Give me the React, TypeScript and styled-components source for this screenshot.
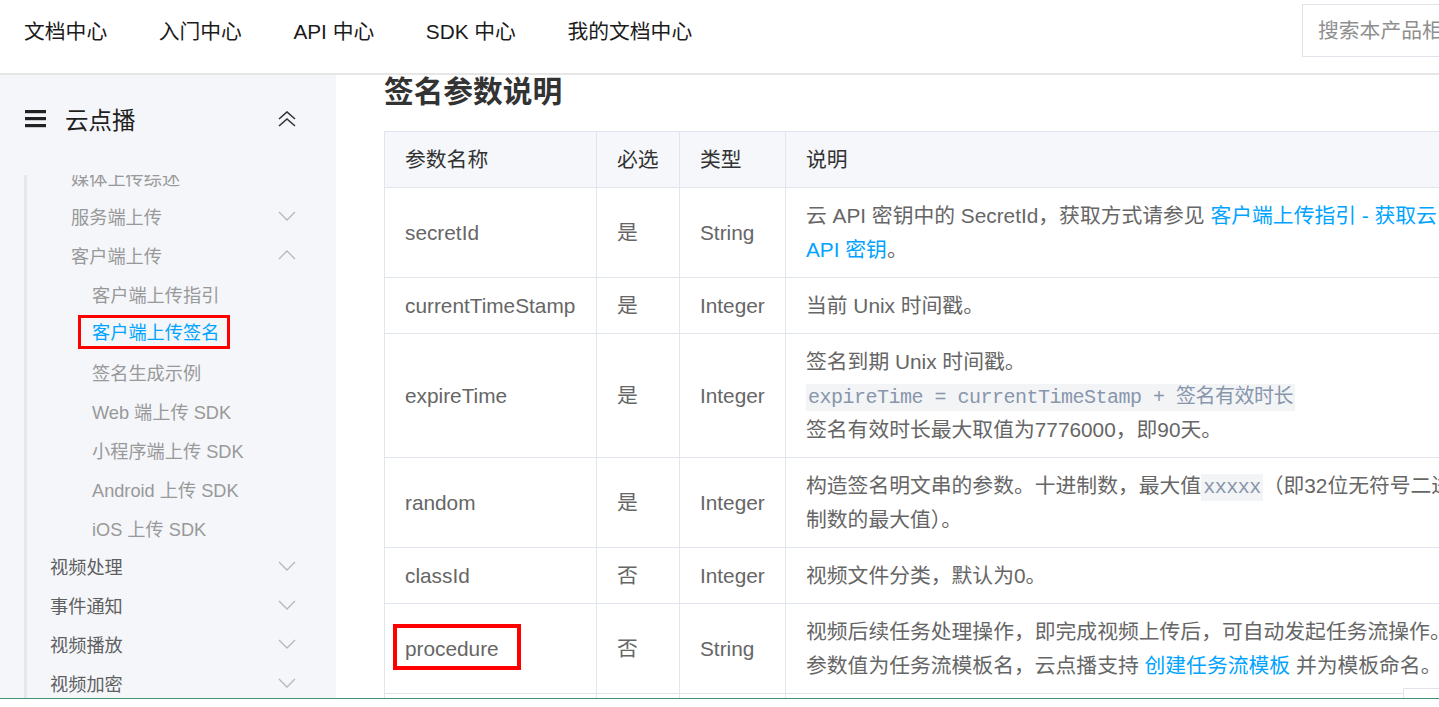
import React from "react";
import styled, { createGlobalStyle } from "styled-components";

const GlobalStyle = createGlobalStyle`
  html, body { margin: 0; padding: 0; background: #fff; }
  body {
    font-family: "Liberation Sans", "Noto Sans CJK SC", sans-serif;
    overflow: hidden;
  }
  * { box-sizing: border-box; }
`;

const Page = styled.div`
  width: 1439px;
  height: 707px;
  display: flex;
  flex-direction: column;
  overflow: hidden;
`;

const Header = styled.header`
  flex: none;
  height: 75px;
  display: flex;
  align-items: flex-start;
  padding-left: 24px;
  border-bottom: 2px solid #e6e6e6;
  background: #fff;
`;

const Nav = styled.nav`
  flex: 1;
  height: 59px;
  display: flex;
  align-items: center;
  gap: 51.5px;
`;

const NavItem = styled.a`
  font-size: 20.8px;
  color: #1b1b1b;
  text-decoration: none;
  white-space: nowrap;
`;

const Search = styled.input`
  flex: none;
  width: 137px;
  height: 53px;
  margin-top: 4px;
  padding: 0 0 0 15px;
  border: 1px solid #dfe3ea;
  border-right: none;
  outline: none;
  font-family: "Liberation Sans", "Noto Sans CJK SC", sans-serif;
  font-size: 20.8px;
  color: #333;
  background: #fff;
  &::placeholder { color: #8f8f8f; }
`;

const Body = styled.div`
  flex: 1;
  min-height: 0;
  display: flex;
`;

const Sidebar = styled.aside`
  flex: none;
  width: 336px;
  background: #f4f6fa;
  display: flex;
  flex-direction: column;
  padding-top: 20px;
  min-height: 0;
`;

const SideTitle = styled.div`
  flex: none;
  height: 48px;
  display: flex;
  align-items: center;
  padding: 0 40px 0 25px;
`;

const TitleText = styled.span`
  margin-left: 19px;
  font-size: 23.5px;
  color: #1f1f1f;
`;

const TitleToggle = styled.span`
  margin-left: auto;
  display: flex;
`;

const Tree = styled.div`
  flex: 1;
  min-height: 0;
  overflow: hidden;
  margin: 32px 0 0 24px;
  border-left: 3px solid #e4e7ed;
`;

const TreeInner = styled.div`
  margin-top: -18px;
`;

const Group = styled.div<{ $shift?: number }>`
  margin-top: ${(p) => p.$shift ?? 0}px;
`;

const Item = styled.div<{ $level: number; $active?: boolean }>`
  position: relative;
  height: 39px;
  display: flex;
  align-items: center;
  padding: 0 40px 0 ${(p) => (p.$level === 0 ? 23 : p.$level === 1 ? 44 : 65)}px;
  font-size: 18.2px;
  white-space: nowrap;
  color: ${(p) => (p.$active ? "#00a4ff" : p.$level === 0 ? "#5f5f5f" : "#999")};
  &::before {
    content: "";
    display: ${(p) => (p.$active ? "block" : "none")};
    position: absolute;
    left: -3px;
    top: 7px;
    width: 3px;
    height: 26px;
    background: #00a4ff;
  }
`;

const ItemChevron = styled.span`
  margin-left: auto;
  display: flex;
`;

const MarkedLabel = styled.span`
  position: relative;
  display: inline-block;
  line-height: 24px;
  &::after {
    content: "";
    position: absolute;
    left: -14px;
    right: -11px;
    top: -6px;
    bottom: -4px;
    border: 3px solid #ff0000;
  }
`;

const Main = styled.main`
  flex: 1;
  min-width: 0;
  position: relative;
  overflow: hidden;
  padding-left: 48px;
`;

const Heading = styled.h2`
  margin: 0;
  font-size: 29.7px;
  line-height: 34px;
  font-weight: bold;
  color: #333;
  white-space: nowrap;
`;

const Table = styled.table`
  margin-top: 22px;
  border-collapse: collapse;
  table-layout: fixed;
  width: 1097px;
`;

const Th = styled.th`
  padding: 11px 20px 10px;
  line-height: 34px;
  font-size: 20.8px;
  font-weight: normal;
  text-align: left;
  color: #333;
  background: #f5f7fa;
  border: 1px solid #e1e6ee;
  white-space: nowrap;
`;

const Td = styled.td`
  padding: 11px 20px 10px;
  line-height: 34px;
  font-size: 20.8px;
  color: #666;
  vertical-align: middle;
  border: 1px solid #e1e6ee;
`;

const Link = styled.a`
  color: #00a4ff;
  text-decoration: none;
`;

const Code = styled.code`
  font-family: "Liberation Mono", "Noto Sans CJK SC", monospace;
  font-size: 20px;
  line-height: 1;
  letter-spacing: -0.5px;
  color: #8896ac;
  background: #f3f4f6;
  padding: 2px 2px;
`;

const MarkedCell = styled.span`
  position: relative;
  &::after {
    content: "";
    position: absolute;
    left: -12px;
    right: -22px;
    top: -13px;
    bottom: -10px;
    border: 4px solid #ff0000;
  }
`;

const FloatTab = styled.div`
  position: absolute;
  left: 1067px;
  bottom: 0;
  width: 60px;
  height: 10px;
  background: #fff;
  border: 1px solid #dfe3ea;
  border-bottom: none;
`;

const Footer = styled.div`
  flex: none;
  height: 9px;
  background: #fff;
  border-top: 1px solid #3f9372;
`;

const Hamburger = () => (
  <svg width="21" height="18" viewBox="0 0 21 18">
    <rect x="0" y="0" width="21" height="3.2" fill="#222" />
    <rect x="0" y="7" width="21" height="3.2" fill="#222" />
    <rect x="0" y="14" width="21" height="3.2" fill="#222" />
  </svg>
);

const DoubleUp = () => (
  <svg width="18" height="16" viewBox="0 0 18 16">
    <polyline points="1,8 9,1 17,8" fill="none" stroke="#333" strokeWidth="1.6" />
    <polyline points="1,15 9,8 17,15" fill="none" stroke="#333" strokeWidth="1.6" />
  </svg>
);

const Chevron = ({ up }: { up?: boolean }) => (
  <svg width="18" height="10" viewBox="0 0 18 10">
    <polyline
      points={up ? "1,9 9,1 17,9" : "1,1 9,9 17,1"}
      fill="none"
      stroke="#b3b7be"
      strokeWidth="1.3"
    />
  </svg>
);

export default function App() {
  return (
    <Page>
      <GlobalStyle />
      <Header>
        <Nav>
          <NavItem>文档中心</NavItem>
          <NavItem>入门中心</NavItem>
          <NavItem>API 中心</NavItem>
          <NavItem>SDK 中心</NavItem>
          <NavItem>我的文档中心</NavItem>
        </Nav>
        <Search placeholder="搜索本产品相关文档" />
      </Header>
      <Body>
        <Sidebar>
          <SideTitle>
            <Hamburger />
            <TitleText>云点播</TitleText>
            <TitleToggle>
              <DoubleUp />
            </TitleToggle>
          </SideTitle>
          <Tree>
            <TreeInner>
              <Item $level={1}>媒体上传综述</Item>
              <Item $level={1}>
                服务端上传
                <ItemChevron><Chevron /></ItemChevron>
              </Item>
              <Item $level={1}>
                客户端上传
                <ItemChevron><Chevron up /></ItemChevron>
              </Item>
              <Item $level={2}>客户端上传指引</Item>
              <Item $level={2} $active>
                <MarkedLabel>客户端上传签名</MarkedLabel>
              </Item>
              <Item $level={2}>签名生成示例</Item>
              <Item $level={2}>Web 端上传 SDK</Item>
              <Item $level={2}>小程序端上传 SDK</Item>
              <Item $level={2}>Android 上传 SDK</Item>
              <Item $level={2}>iOS 上传 SDK</Item>
              <Group $shift={-1}>
                {["视频处理", "事件通知", "视频播放", "视频加密"].map((t) => (
                  <Item key={t} $level={0}>
                    {t}
                    <ItemChevron><Chevron /></ItemChevron>
                  </Item>
                ))}
              </Group>
            </TreeInner>
          </Tree>
        </Sidebar>
        <Main>
          <Heading>签名参数说明</Heading>
          <Table>
            <colgroup>
              <col style={{ width: 212 }} />
              <col style={{ width: 83 }} />
              <col style={{ width: 106 }} />
              <col style={{ width: 696 }} />
            </colgroup>
            <thead>
              <tr>
                <Th>参数名称</Th>
                <Th>必选</Th>
                <Th>类型</Th>
                <Th>说明</Th>
              </tr>
            </thead>
            <tbody>
              <tr>
                <Td>secretId</Td>
                <Td>是</Td>
                <Td>String</Td>
                <Td>
                  云 API 密钥中的 SecretId，获取方式请参见 <Link>客户端上传指引 - 获取云 API 密钥</Link>。
                </Td>
              </tr>
              <tr>
                <Td>currentTimeStamp</Td>
                <Td>是</Td>
                <Td>Integer</Td>
                <Td>当前 Unix 时间戳。</Td>
              </tr>
              <tr>
                <Td>expireTime</Td>
                <Td>是</Td>
                <Td>Integer</Td>
                <Td>
                  签名到期 Unix 时间戳。
                  <br />
                  <Code>expireTime = currentTimeStamp + 签名有效时长</Code>
                  <br />
                  签名有效时长最大取值为7776000，即90天。
                </Td>
              </tr>
              <tr>
                <Td>random</Td>
                <Td>是</Td>
                <Td>Integer</Td>
                <Td>
                  构造签名明文串的参数。十进制数，最大值<Code>xxxxx</Code>（即32位无符号二进制数的最大值）。
                </Td>
              </tr>
              <tr>
                <Td>classId</Td>
                <Td>否</Td>
                <Td>Integer</Td>
                <Td>视频文件分类，默认为0。</Td>
              </tr>
              <tr>
                <Td>
                  <MarkedCell>procedure</MarkedCell>
                </Td>
                <Td>否</Td>
                <Td>String</Td>
                <Td>
                  视频后续任务处理操作，即完成视频上传后，可自动发起任务流操作。参数值为任务流模板名，云点播支持 <Link>创建任务流模板</Link> 并为模板命名。
                </Td>
              </tr>
              <tr>
                <Td>storageRegion</Td>
                <Td>否</Td>
                <Td>String</Td>
                <Td>指定文件的存储地域。</Td>
              </tr>
            </tbody>
          </Table>
          <FloatTab />
        </Main>
      </Body>
      <Footer />
    </Page>
  );
}
